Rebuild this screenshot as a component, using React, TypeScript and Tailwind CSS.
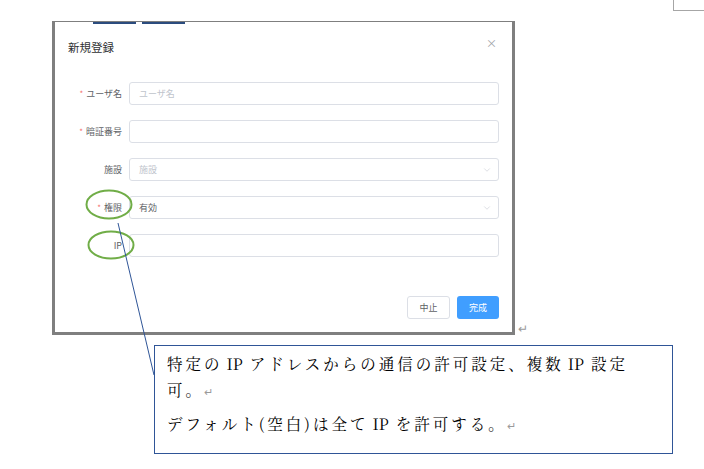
import React from "react";
import { ChevronDown } from "lucide-react";

const sans = "font-['Noto_Sans_CJK_JP','Noto_Sans',sans-serif]";

function Label({ text, required }: { text: string; required?: boolean }) {
  return (
    <div className="w-[55px] shrink-0 flex items-center justify-end text-[9px] text-[#606266] leading-none">
      {required && <span className="text-[#f56c6c] mr-[3px] text-[8px]">*</span>}
      <span>{text}</span>
    </div>
  );
}

function Field({
  label,
  required,
  placeholder,
  value,
  select,
}: {
  label: string;
  required?: boolean;
  placeholder?: string;
  value?: string;
  select?: boolean;
}) {
  return (
    <div className="flex h-[23px] gap-[7px]">
      <Label text={label} required={required} />
      <div className="w-[370px] h-[23px] border border-[#dcdfe6] rounded-[3px] bg-white flex items-center justify-between pl-[9px] pr-[6px] text-[9px] leading-none">
        {value ? (
          <span className="text-[#606266]">{value}</span>
        ) : (
          <span className="text-[#c0c4cc]">{placeholder ?? ""}</span>
        )}
        {select && <ChevronDown size={10} strokeWidth={1.3} className="text-[#c0c4cc]" />}
      </div>
    </div>
  );
}

function IP() {
  return <span className="inline-block tracking-normal ml-[4px] mr-[7px]">IP</span>;
}

export default function App() {
  return (
    <div className={`relative w-[704px] h-[469px] bg-white overflow-hidden ${sans}`}>
      {/* page corner mark */}
      <div className="absolute left-[673px] top-0 w-[31px] h-[11px] border-l border-b border-[#a6a6a6]" />

      <div className="flex items-end pt-[21px] pl-[52px]">
        <div className="w-[463px] h-[314px] border-[3px] border-t border-[#7f7f7f] bg-white flex flex-col">
          <div className="flex h-[2px] gap-[6px] pl-[38px]">
            <div className="w-[43px] bg-[#2b4c7e]" />
            <div className="w-[43px] bg-[#2b4c7e]" />
          </div>
          <div className="flex flex-col pl-[13px] pr-[13px] pt-[15px]">
            <div className="flex justify-between items-start h-[16px]">
              <span className="text-[11.5px] leading-[16px] text-[#303133]">新規登録</span>
              <span className="text-[11px] leading-[11px] text-[#a0a3a8] mr-[2px] mt-[-1px]">×</span>
            </div>
            <div className="flex flex-col gap-[15px] mt-[27px] -ml-[1px]">
              <Field label="ユーザ名" required placeholder="ユーザ名" />
              <Field label="暗証番号" required />
              <Field label="施設" placeholder="施設" select />
              <Field label="権限" required value="有効" select />
              <Field label="IP" />
            </div>
            <div className="flex justify-end gap-[7px] mt-[39px]">
              <button className="w-[43px] h-[23px] border border-[#dcdfe6] rounded-[3px] bg-white text-[9px] text-[#606266] leading-none">
                中止
              </button>
              <button className="w-[42px] h-[23px] rounded-[3px] bg-[#409eff] text-[9px] text-white leading-none">
                完成
              </button>
            </div>
          </div>
        </div>
        <span className="ml-[3px] mb-[1px] text-[12px] leading-[12px] text-[#9a9a9a]">↵</span>
      </div>

      {/* callout */}
      <div className="ml-[154px] mt-[10px] w-[519px] h-[109px] border-[1.5px] border-[#2f5597] pl-[12px] pt-[4px] font-['Noto_Serif_CJK_JP','Liberation_Serif','Noto_Sans_CJK_JP',serif] text-[15.5px] text-black tracking-[3px]">
        <div className="leading-[26px] whitespace-nowrap">
          特定の<IP />アドレスからの通信の許可設定、複数<IP />設定
        </div>
        <div className="leading-[26px] whitespace-nowrap">
          可。<span className="text-[11px] text-[#9a9a9a]">↵</span>
        </div>
        <div className="leading-[26px] mt-[6px] whitespace-nowrap">
          デフォルト(空白)は全て<IP />を許可する。<span className="text-[11px] text-[#9a9a9a]">↵</span>
        </div>
      </div>

      {/* annotation overlay */}
      <svg className="absolute left-0 top-0 pointer-events-none" width="704" height="469">
        <ellipse cx="109" cy="204.5" rx="22.5" ry="14" fill="none" stroke="#70ad47" strokeWidth="2" />
        <ellipse cx="111" cy="245" rx="22.5" ry="13.5" fill="none" stroke="#70ad47" strokeWidth="2" />
        <line x1="118" y1="223" x2="154" y2="375" stroke="#2f5597" strokeWidth="1" />
      </svg>
    </div>
  );
}
